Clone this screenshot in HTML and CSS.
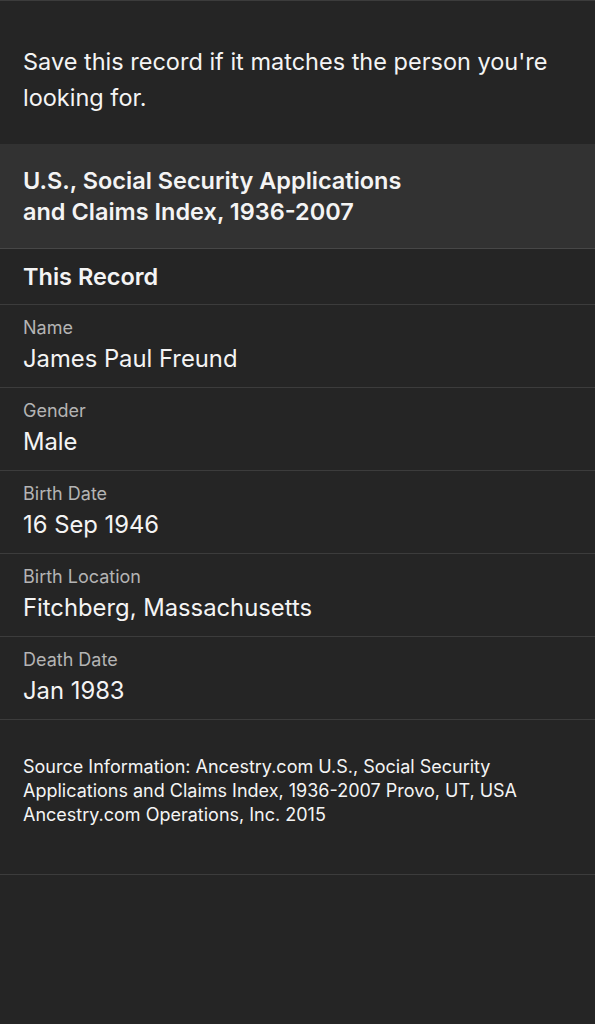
FILE: index.html
```html
<!DOCTYPE html>
<html>
<head>
    <meta charset="UTF-8">
    <title>record</title>
    <link rel="stylesheet" href="styles.css">
</head>
<body>
    <div class="intro">
        <p>Save this record if it matches the person you're looking for.</p>
    </div>
    <div class="collection">
        <h1>U.S., Social Security Applications<br>and Claims Index, 1936-2007</h1>
    </div>
    <div class="sectionHead">
        <h2>This Record</h2>
    </div>
    <ul class="fields">
        <li>
            <span class="label">Name</span>
            <span class="value">James Paul Freund</span>
        </li>
        <li>
            <span class="label">Gender</span>
            <span class="value">Male</span>
        </li>
        <li>
            <span class="label">Birth Date</span>
            <span class="value">16 Sep 1946</span>
        </li>
        <li>
            <span class="label">Birth Location</span>
            <span class="value">Fitchberg, Massachusetts</span>
        </li>
        <li>
            <span class="label">Death Date</span>
            <span class="value">Jan 1983</span>
        </li>
    </ul>
    <div class="source">
        <p>Source Information: Ancestry.com U.S., Social Security Applications and Claims Index, 1936-2007 Provo, UT, USA Ancestry.com Operations, Inc. 2015</p>
    </div>
</body>
</html>
```

FILE: styles.css
```css
/* reset */
h1, h2, p, ul, li{
    margin: 0;
    padding: 0;
    font-size: 100%;
    font: inherit;
}

ul {
    list-style: none;
}

/* page */
body{
    margin: 0;
    min-height: 1024px;
    background-color: #252525;
    color: #f4f4f4;
    font-family: Inter, "Liberation Sans", sans-serif;
    border-top: 1px solid #3c3c3c;
}

.intro{
    padding: 43px 23px 28px;
    font-size: 23.5px;
    line-height: 36px;
}

.collection{
    background-color: #323232;
    padding: 21px 23px;
    border-bottom: 1px solid #474747;
}

.collection h1{
    font-size: 23.5px;
    line-height: 31px;
    font-weight: 600;
}

.sectionHead{
    padding: 0 23px;
    border-bottom: 1px solid #3c3c3c;
}

.sectionHead h2{
    font-size: 23.5px;
    line-height: 55px;
    font-weight: 600;
}

.fields li{
    display: flex;
    flex-direction: column;
    height: 82px;
    padding: 0 23px;
    border-bottom: 1px solid #3c3c3c;
}

.fields .label{
    padding-top: 12px;
    font-size: 18px;
    line-height: 22px;
    color: #b4b4b4;
}

.fields .value{
    padding-top: 2px;
    font-size: 23.8px;
    line-height: 36px;
}

.source{
    padding: 35px 23px 47px;
    font-size: 18px;
    line-height: 24px;
    border-bottom: 1px solid #3c3c3c;
}
```
